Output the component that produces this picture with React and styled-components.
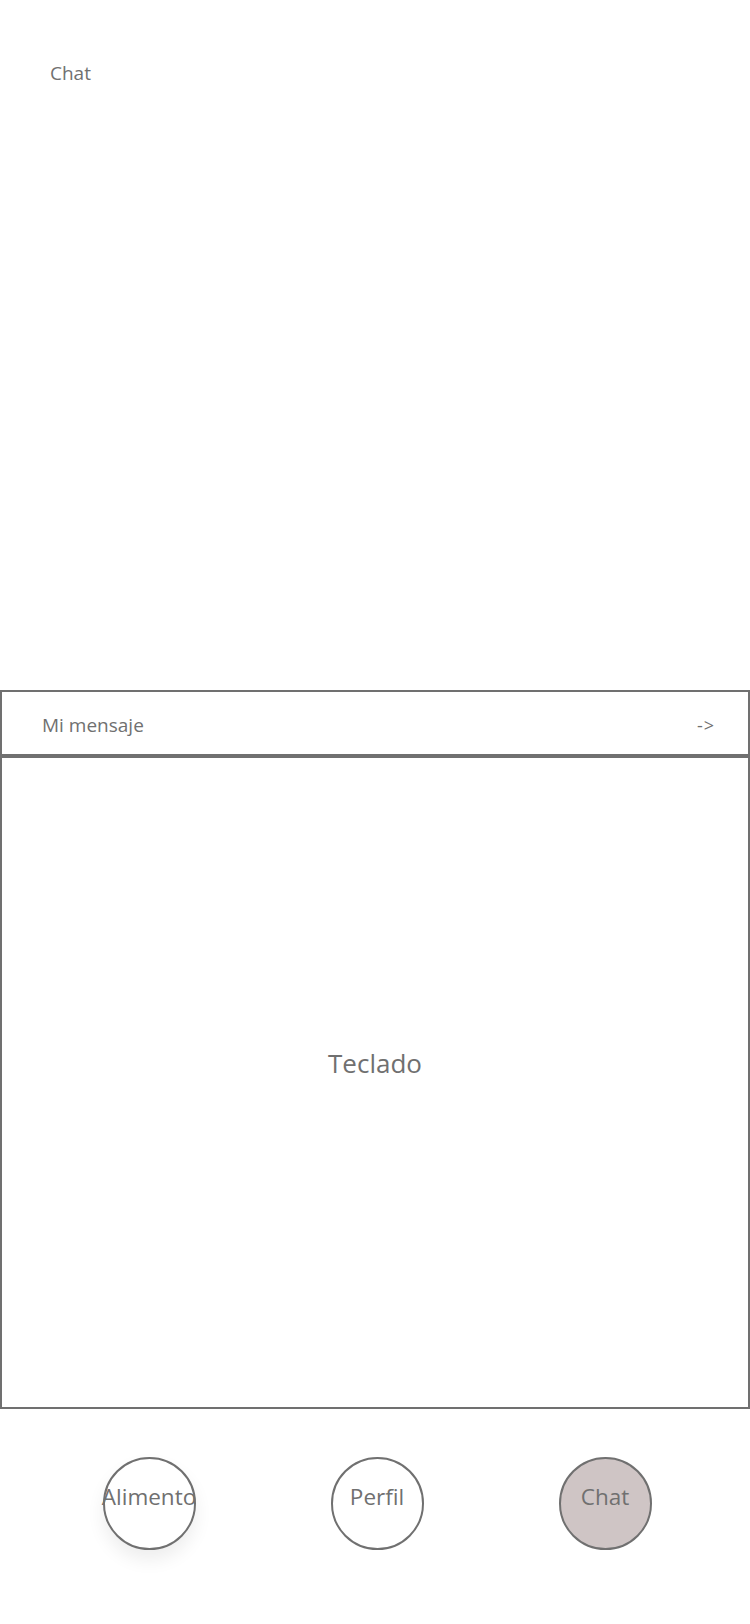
import styled, { createGlobalStyle } from "styled-components";

const GlobalStyle = createGlobalStyle`
  html, body {
    margin: 0;
    padding: 0;
    background: #ffffff;
  }
  * {
    box-sizing: border-box;
  }
`;

const Screen = styled.div`
  width: 750px;
  height: 1624px;
  display: flex;
  flex-direction: column;
  background: #ffffff;
  font-family: "Open Sans", "Noto Sans", Arial, sans-serif;
  color: #707070;
`;

const MessagesArea = styled.div`
  height: 690px;
  padding: 59px 0 0 50px;
`;

const Title = styled.div`
  font-size: 19px;
  line-height: 28px;
`;

const InputBar = styled.div`
  height: 66px;
  border: 2px solid #707070;
  display: flex;
  align-items: center;
  justify-content: space-between;
  padding: 4px 33px 0 40px;
  font-size: 19px;
`;

const SendArrow = styled.span`
  font-size: 18px;
  letter-spacing: 1px;
`;

const Keyboard = styled.div`
  height: 653px;
  border: 2px solid #707070;
  display: flex;
  align-items: center;
  justify-content: center;
  font-size: 26px;
  padding-bottom: 40px;
`;

const NavBar = styled.nav`
  flex: 1;
  display: flex;
  justify-content: center;
  align-items: flex-start;
  gap: 135px;
  padding: 48px 0 0 4px;
`;

const NavButton = styled.div`
  width: 93px;
  height: 93px;
  border-radius: 50%;
  border: 2px solid #707070;
  background: ${(p) => (p.$active ? "#cfc5c5" : "#ffffff")};
  box-shadow: ${(p) => (p.$shadow ? "0 10px 18px rgba(0, 0, 0, 0.07)" : "none")};
  display: flex;
  align-items: center;
  justify-content: center;
  padding-bottom: 14px;
  font-size: 22.5px;
  white-space: nowrap;
`;

function App() {
  const tabs = [
    { label: "Alimento", shadow: true },
    { label: "Perfil" },
    { label: "Chat", active: true },
  ];

  return (
    <>
      <GlobalStyle />
      <Screen>
        <MessagesArea>
          <Title>Chat</Title>
        </MessagesArea>

        <InputBar>
          <span>Mi mensaje</span>
          <SendArrow>-&gt;</SendArrow>
        </InputBar>

        <Keyboard>Teclado</Keyboard>

        <NavBar>
          {tabs.map((t) => (
            <NavButton key={t.label} $active={t.active} $shadow={t.shadow}>
              {t.label}
            </NavButton>
          ))}
        </NavBar>
      </Screen>
    </>
  );
}

export default App;
